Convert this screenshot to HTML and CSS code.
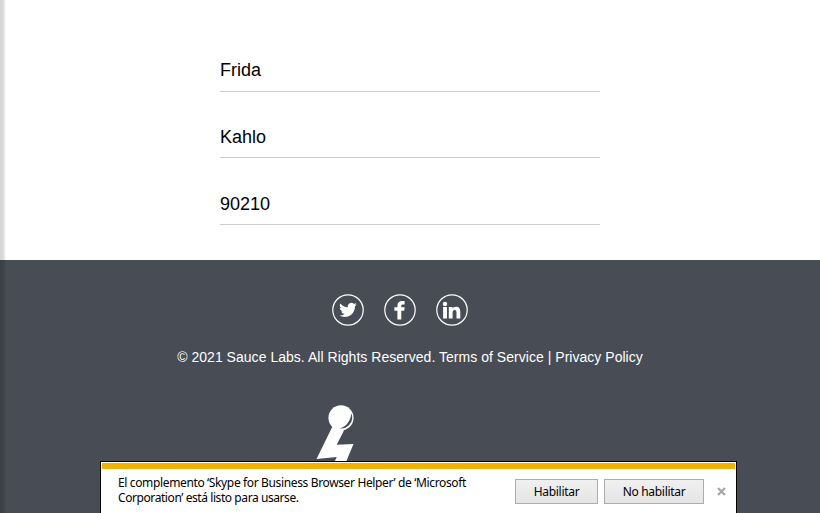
FILE: index.html
```html
<!DOCTYPE html>
<html lang="es">
<head>
<meta charset="utf-8">
<title>Checkout</title>
<link rel="stylesheet" href="styles.css">
</head>
<body>
<main class="form">
  <div class="field">Frida</div>
  <div class="field">Kahlo</div>
  <div class="field last">90210</div>
</main>
<footer class="footer">
  <div class="social">
    <svg viewBox="0 0 32 32"><circle class="ring" cx="16" cy="16" r="15.2"/><path transform="translate(7.2 7.1) scale(.73)" d="M23.95 4.57a10 10 0 0 1-2.82.78 4.96 4.96 0 0 0 2.16-2.73c-.95.56-2 .96-3.13 1.19a4.92 4.92 0 0 0-8.38 4.48C7.69 8.1 4.07 6.13 1.64 3.16a4.92 4.92 0 0 0 1.52 6.57 4.9 4.9 0 0 1-2.23-.61v.06a4.92 4.92 0 0 0 3.95 4.83 5 5 0 0 1-2.21.08 4.94 4.94 0 0 0 4.6 3.42A9.87 9.87 0 0 1 0 19.54a13.99 13.99 0 0 0 7.55 2.21c9.05 0 14-7.5 14-13.98 0-.21 0-.42-.02-.63a9.94 9.94 0 0 0 2.46-2.55z"/></svg>
    <svg viewBox="0 0 32 32"><circle class="ring" cx="16" cy="16" r="15.2"/><path d="M13.4 25.5v-8.8h-3v-3.5h3v-1.8c0-3 1.8-4.5 4.6-4.5h2.6v3.5h-1.7c-1.2 0-1.6.5-1.6 1.5v1.3h3.4l-.5 3.5h-2.9v8.8z"/></svg>
    <svg viewBox="0 0 32 32"><circle class="ring" cx="16" cy="16" r="15.2"/><circle cx="9" cy="10" r="2.2"/><path d="M7.1 13.1H11V24.4H7.1zM12.8 13.1h3.7v1.5c.6-1.1 1.9-1.8 3.5-1.8 3.4 0 4.3 2.1 4.3 5.1v6.5h-3.8v-5.7c0-1.4-.1-2.8-1.8-2.8-1.6 0-2.1 1.2-2.1 2.7v5.8h-3.8z"/></svg>
  </div>
  <div class="copy">© 2021 Sauce Labs. All Rights Reserved. Terms of Service | Privacy Policy</div>
  <svg class="robot" viewBox="0 0 60 62">
    <path d="M22.7 26 34 30.5 26.7 44.8 43.5 44 36 62H24.5L26.7 57.1 6.5 59z"/>
    <circle cx="31" cy="17.8" r="12.6"/>
    <path class="shade" d="M41.1 13.5C41.2 20 36.4 26.7 30 28.3 37 29.2 42.8 23 42.2 16.5Q42 14.5 41.1 13.5z"/>
  </svg>
</footer>
<div class="edge"></div>
<div class="notice">
  <div class="stripe"></div>
  <div class="bar">
    <div class="message"><div class="line1">El complemento ‘Skype for Business Browser Helper’ de ‘Microsoft</div><div class="line2">Corporation’ está listo para usarse.</div></div>
    <button class="enable">Habilitar</button>
    <button class="disable">No habilitar</button>
    <svg class="close" viewBox="0 0 9 9"><path d="M1 1 8 8M8 1 1 8"/></svg>
  </div>
</div>
</body>
</html>
```
FILE: styles.css
```css
* { box-sizing: border-box; }
body {
  margin: 0;
  height: 513px;
  overflow: hidden;
  background: #fff;
  font-family: "Liberation Sans", Arial, sans-serif;
}
.form {
  width: 380px;
  height: 260px;
  margin: 0 auto;
  padding-top: 49px;
}
.field {
  height: 43px;
  margin-bottom: 23px;
  border-bottom: 1px solid #ccc;
  font-size: 18px;
  line-height: 42px;
}
.field + .field { margin-bottom: 24px; line-height: 44px; }
.field.last { margin-bottom: 0; }
.footer {
  height: 253px;
  padding-top: 34px;
  background: #474c55;
  color: #fff;
}
.social {
  display: flex;
  gap: 20px;
  margin-left: 332px;
}
.social svg { width: 32px; height: 32px; fill: #fff; }
.social .ring { fill: none; stroke: #fff; stroke-width: 1.2; }
.copy {
  margin-top: 23px;
  font-size: 14px;
  line-height: 16px;
  letter-spacing: .03px;
  text-align: center;
  white-space: nowrap;
}
.robot {
  display: block;
  width: 60px;
  height: 62px;
  margin: 35px 0 0 310px;
  fill: #fff;
}
.robot .shade { fill: #474c55; }
.edge {
  position: absolute;
  left: 0;
  top: 0;
  width: 6px;
  height: 513px;
  background: linear-gradient(90deg, rgba(0,0,0,.17), rgba(0,0,0,.14) 55%, transparent);
}
.notice {
  position: absolute;
  left: 100px;
  top: 461px;
  width: 637px;
  height: 60px;
  padding: 1px;
  border: 1px solid #000;
  background: #fff;
  font-family: "Noto Sans", sans-serif;
  font-size: 12px;
  color: #000;
}
.stripe { height: 6px; background: #f2b000; }
.bar { display: flex; align-items: flex-start; padding-left: 16px; }
.message {
  width: 397px;
  margin-top: 6px;
  line-height: 15px;
  white-space: nowrap;
}
.line1 { letter-spacing: -.36px; }
.line2 { letter-spacing: -.42px; }
.bar button {
  height: 25px;
  margin: 10px 6px 0 0;
  padding: 0;
  border: 1px solid #acacac;
  background: linear-gradient(#f0f0f0, #e5e5e5);
  color: #000;
  font: 12px/23px "Noto Sans", sans-serif;
  letter-spacing: -.3px;
}
.bar .enable { width: 83px; }
.bar .disable { width: 100px; }
.close {
  width: 9px;
  height: 9px;
  margin: 18px 0 0 7px;
  fill: none;
  stroke: #a6a6a6;
  stroke-width: 2.2;
}
```
